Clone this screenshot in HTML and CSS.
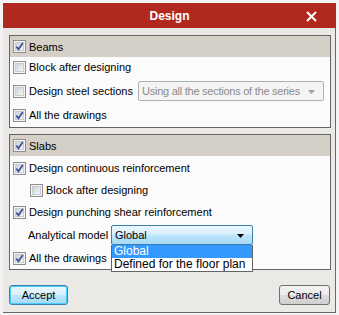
FILE: index.html
```html
<!DOCTYPE html>
<html>
<head>
<meta charset="utf-8">
<link rel="stylesheet" href="styles.css">
</head>
<body>
<svg class="defs" width="0" height="0" aria-hidden="true">
  <defs>
    <linearGradient id="cbg" x1="0" y1="0" x2="1" y2="1">
      <stop offset="0" stop-color="#cbcfd5"/>
      <stop offset="1" stop-color="#f7f7f7"/>
    </linearGradient>
    <symbol id="cb" viewBox="0 0 13 13">
      <rect x="0.5" y="0.5" width="12" height="12" fill="#f4f4f4" stroke="#8e8f8f"/>
      <rect x="2.5" y="2.5" width="8" height="8" fill="url(#cbg)" stroke="#c9cbce"/>
    </symbol>
    <symbol id="cbc" viewBox="0 0 13 13">
      <rect x="0.5" y="0.5" width="12" height="12" fill="#f4f4f4" stroke="#8e8f8f"/>
      <rect x="2.5" y="2.5" width="8" height="8" fill="url(#cbg)" stroke="#c9cbce"/>
      <path d="M3.3 6.6 L5.5 9.3 L9.8 3" fill="none" stroke="#3d4f9a" stroke-width="1.7"/>
    </symbol>
  </defs>
</svg>
<div class="window">
  <div class="titlebar">
    <span class="title">Design</span>
    <svg class="close" width="11" height="11" viewBox="0 0 11 11"><path d="M1 1 L10 10 M10 1 L1 10" stroke="#fff" stroke-width="2"/></svg>
  </div>
  <div class="body">
    <section class="group">
      <div class="ghead"><div class="row"><svg class="cb"><use href="#cbc"/></svg><span>Beams</span></div></div>
      <div class="gbody beams">
        <div class="row"><svg class="cb"><use href="#cb"/></svg><span>Block after designing</span></div>
        <div class="row"><svg class="cb"><use href="#cb"/></svg><span class="lbl-steel">Design steel sections</span>
          <div class="combo disabled"><span>Using all the sections of the series</span><svg class="arrow" width="7" height="4" viewBox="0 0 7 4"><path d="M0 0 H7 L3.5 4 Z" fill="#a0a0a0"/></svg></div>
        </div>
        <div class="row"><svg class="cb"><use href="#cbc"/></svg><span>All the drawings</span></div>
      </div>
    </section>
    <section class="group slabs">
      <div class="ghead"><div class="row"><svg class="cb"><use href="#cbc"/></svg><span>Slabs</span></div></div>
      <div class="gbody slabs-body">
        <div class="row"><svg class="cb"><use href="#cbc"/></svg><span>Design continuous reinforcement</span></div>
        <div class="row indent"><svg class="cb"><use href="#cb"/></svg><span>Block after designing</span></div>
        <div class="row"><svg class="cb"><use href="#cbc"/></svg><span>Design punching shear reinforcement</span></div>
        <div class="row model">
          <span class="model-lbl">Analytical model</span>
          <div class="combo active"><span>Global</span><svg class="arrow" width="7" height="4" viewBox="0 0 7 4"><path d="M0 0 H7 L3.5 4 Z" fill="#000"/></svg>
            <ul class="dropdown">
              <li class="sel">Global</li>
              <li>Defined for the floor plan</li>
            </ul>
          </div>
        </div>
        <div class="row last"><svg class="cb"><use href="#cbc"/></svg><span>All the drawings</span></div>
      </div>
    </section>
    <div class="buttons">
      <button class="btn primary">Accept</button>
      <button class="btn">Cancel</button>
    </div>
  </div>
</div>
</body>
</html>
```

FILE: styles.css
```css
html, body {
  margin: 0;
  padding: 0;
  background: #f3f3f3;
}
body {
  width: 339px;
  height: 315px;
  overflow: hidden;
  font-family: "Liberation Sans", Arial, sans-serif;
  font-size: 11px;
  color: #000;
}
.defs {
  position: absolute;
  width: 0;
  height: 0;
}
.window {
  margin: 3px 3px 0 3px;
  width: 333px;
}
.titlebar {
  position: relative;
  height: 25px;
  background: #b1281f;
  display: flex;
  align-items: center;
  justify-content: center;
}
.title {
  color: #fff;
  font-weight: bold;
  font-size: 12px;
}
.close {
  position: absolute;
  right: 19px;
  top: 8px;
}
.body {
  box-sizing: border-box;
  height: 285px;
  background: #ebe9e5;
  border-right: 1px solid #6a6a6a;
  border-bottom: 1px solid #6a6a6a;
  padding: 7px 0 0 6px;
}
.group {
  box-sizing: border-box;
  width: 322px;
  border: 1px solid #646464;
  background: #fbfbfb;
}
.group.slabs {
  margin-top: 6px;
}
.ghead {
  height: 21px;
  background: #d4d0c8;
  display: flex;
  align-items: center;
  padding-left: 3px;
}
.row {
  display: flex;
  align-items: center;
  height: 20px;
  white-space: nowrap;
}
.cb {
  width: 13px;
  height: 13px;
  flex: none;
  margin-right: 3px;
}
.gbody {
  padding-left: 3px;
}
.beams {
  display: flex;
  flex-direction: column;
  gap: 4px;
  padding-bottom: 2px;
}
.lbl-steel {
  width: 109px;
}
.combo {
  position: relative;
  box-sizing: border-box;
  height: 20px;
  display: flex;
  align-items: center;
  padding-left: 3px;
  border-radius: 2px;
}
.combo .arrow {
  position: absolute;
  right: 8px;
  top: 8px;
}
.combo.disabled {
  width: 186px;
  background: #f4f4f4;
  border: 1px solid #adb2b5;
  color: #8b8b8b;
  letter-spacing: -0.25px;
}
.slabs-body {
  display: flex;
  flex-direction: column;
  gap: 2px;
  padding-top: 2px;
  padding-bottom: 1px;
}
.indent {
  padding-left: 17px;
}
.model {
  margin-top: 1px;
  padding-left: 15px;
}
.model-lbl {
  width: 83px;
}
.combo.active {
  width: 142px;
  border: 1px solid #3c7fb1;
  background: linear-gradient(#eaf6fd, #d9f0fc 45%, #bee6fd 50%, #a7d9f5);
}
.row.last {
  margin-top: 1px;
}
.dropdown {
  position: absolute;
  left: -1px;
  top: 19px;
  width: 142px;
  box-sizing: border-box;
  margin: 0;
  padding: 0;
  list-style: none;
  background: #fff;
  border: 1px solid #646464;
  border-top: none;
  z-index: 2;
}
.dropdown li {
  height: 13px;
  line-height: 13px;
  padding-left: 2px;
  font-size: 12px;
}
.dropdown li.sel {
  background: #3399ff;
  color: #fff;
}
.buttons {
  display: flex;
  justify-content: space-between;
  width: 321px;
  margin-top: 15px;
}
.btn {
  box-sizing: border-box;
  height: 20px;
  width: 51px;
  font-family: "Liberation Sans", Arial, sans-serif;
  font-size: 11px;
  padding: 0;
  border: 1px solid #707070;
  border-radius: 3px;
  background: linear-gradient(#f2f2f2, #ebebeb 50%, #dddddd 50%, #cfcfcf);
  color: #000;
}
.btn.primary {
  width: 59px;
  border-color: #3c7fb1;
  box-shadow: inset 0 0 0 1px #48d0fd;
  background: linear-gradient(#eaf6fd, #d9f0fc 50%, #bee6fd 50%, #a7d9f5);
}
```
